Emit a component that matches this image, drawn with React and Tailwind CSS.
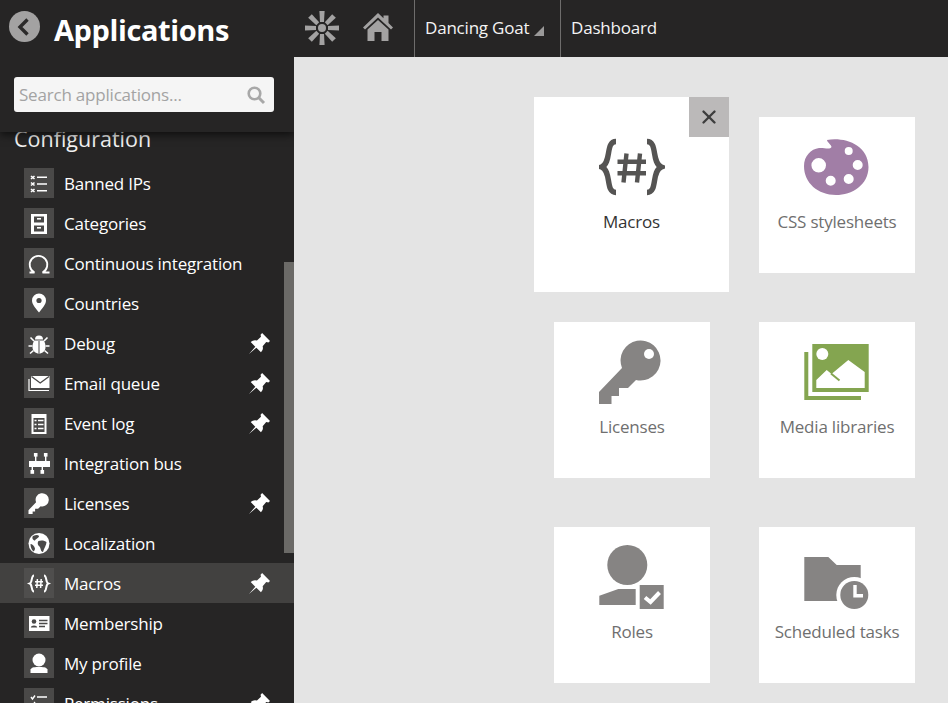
import { X } from 'lucide-react';

const keyPath = 'M0 64V52L23 28A20 20 0 1 1 37 40L29 48H20V56H12.5V64Z';

function Pin() {
  return (
    <svg viewBox="0 0 20 20" className="w-[21px] h-[21px] shrink-0" fill="#fff">
      <path d="M12.5 0L20 7.5L18.5 9L16.4 8.6L13 12.6Q14 16 11.4 18.4L7 14L0 20L6 13L1.6 8.6Q4.2 6.2 7.6 7.2L11.4 3.6L11 1.6Z" />
    </svg>
  );
}

const smallIcons = {
  banned: (
    <g>
      <g stroke="#fff" strokeWidth="1.6">
        <path d="M7 8L10.5 11M10.5 8L7 11M7 14.5L10.5 17.5M10.5 14.5L7 17.5M7 21L10.5 24M10.5 21L7 24" />
      </g>
      <path d="M13 9.3H23M13 16H23M13 22.7H23" stroke="#fff" strokeWidth="1.4" />
    </g>
  ),
  categories: (
    <g>
      <rect x="7" y="6" width="16" height="20" fill="#fff" />
      <rect x="10" y="8.5" width="10" height="6" fill="#4a4948" />
      <rect x="10" y="17.5" width="10" height="6" fill="#4a4948" />
      <rect x="13" y="10" width="4" height="1.6" fill="#fff" />
      <rect x="13" y="19" width="4" height="1.6" fill="#fff" />
    </g>
  ),
  ci: (
    <path d="M5.5 24.5H10.5A8.8 8.8 0 1 1 18.5 24.5H25.5" fill="none" stroke="#fff" strokeWidth="1.8" />
  ),
  pin: (
    <g>
      <path d="M15 24.5C11 19.5 8 16 8 12.5A7 7 0 0 1 22 12.5C22 16 19 19.5 15 24.5Z" fill="#fff" />
      <circle cx="15" cy="12.5" r="2.6" fill="#4a4948" />
    </g>
  ),
  bug: (
    <g fill="#fff">
      <path d="M10.5 12.5H19.5C21 14 21.5 17 21.5 19C21.5 23 18.5 25.5 15 25.5C11.5 25.5 8.5 23 8.5 19C8.5 17 9 14 10.5 12.5Z" />
      <path d="M11 11.5A4 4 0 0 1 19 11.5Z" />
      <path d="M14.5 13V25.5H15.5V13Z" fill="#4a4948" />
      <path d="M10 13L6.5 9.5M20 13L23.5 9.5M8.5 18H4.5M21.5 18H25.5M9.5 22.5L6 25.5M20.5 22.5L24 25.5" stroke="#fff" strokeWidth="1.6" />
    </g>
  ),
  email: (
    <g>
      <path d="M7 8H25.5V20H7Z" fill="#fff" />
      <path d="M7.5 8.5L16.2 15L25 8.5" fill="none" stroke="#4a4948" strokeWidth="1.4" />
      <path d="M5 11V22.5H25" fill="none" stroke="#fff" strokeWidth="1.2" />
    </g>
  ),
  log: (
    <g>
      <rect x="7.5" y="6" width="15" height="20" fill="#fff" />
      <rect x="9.5" y="10" width="11" height="14" fill="#4a4948" />
      <path d="M10.5 12.5H12.5M14 12.5H19.5M10.5 16.5H12.5M14 16.5H19.5M10.5 20.5H12.5M14 20.5H19.5" stroke="#fff" strokeWidth="1.4" />
    </g>
  ),
  bus: (
    <g fill="#fff">
      <rect x="5" y="13" width="21" height="6" />
      <rect x="11" y="5" width="1.4" height="8" />
      <rect x="21" y="5" width="1.4" height="8" />
      <rect x="7.6" y="19" width="1.4" height="5" />
      <rect x="17.6" y="19" width="1.4" height="5" />
      <rect x="9.9" y="5" width="3.6" height="3.6" />
      <rect x="19.9" y="5" width="3.6" height="3.6" />
      <rect x="6.5" y="22" width="3.6" height="3.8" />
      <rect x="16.5" y="22" width="3.6" height="3.8" />
    </g>
  ),
  key: <path d={keyPath} fill="#fff" transform="translate(4.5 5) scale(0.33)" />,
  globe: (
    <g>
      <circle cx="15" cy="15.5" r="10.5" fill="#fff" />
      <path d="M9 8C12 6.5 14 6.5 15 8C15 10 12 10.5 11 12.5C9 12.5 7.5 10 9 8ZM14.5 13C17 12 21 12.5 22.5 14C22.5 17 20 20 19 24C16.5 24 17 20 15.5 18.5C14 17.5 13 15 14.5 13ZM6.5 16C8 16 10.5 18 11 20.5C11 22 10 23 9.5 23.5C7.5 21.5 6.5 19 6.5 16Z" fill="#4a4948" />
    </g>
  ),
  macros: (
    <g fill="none" stroke="#fff" strokeWidth="2">
      <path d="M10 7.5C7 7.5 8.5 14.5 5.8 15.5C8.5 16.5 7 23.5 10 23.5" />
      <path d="M20 7.5C23 7.5 21.5 14.5 24.2 15.5C21.5 16.5 23 23.5 20 23.5" />
      <path d="M13.4 11L12.8 20M17.2 11L16.6 20M11 13.8H19M11 17.2H19" strokeWidth="1.5" />
    </g>
  ),
  card: (
    <g>
      <rect x="5" y="8" width="20.5" height="15" fill="#fff" />
      <circle cx="10" cy="13.5" r="2.3" fill="#4a4948" />
      <path d="M6.8 19.5C6.8 16.8 13.2 16.8 13.2 19.5Z" fill="#4a4948" />
      <path d="M15 12.5H23.5M15 15.5H23.5M15 18.5H21" stroke="#4a4948" strokeWidth="1.4" />
    </g>
  ),
  user: (
    <g fill="#fff">
      <circle cx="15" cy="12" r="6.5" />
      <path d="M6.5 25V21.5C8 19 11 19 15 19C19 19 22 19 23.5 21.5V25Z" />
    </g>
  ),
  perms: (
    <g fill="none" stroke="#fff" strokeWidth="1.4">
      <path d="M7 9L8.5 11L11 7.5M13 9H23" />
      <path d="M7 15.5L8.5 17.5L11 14M13 16H23" />
      <path d="M7 22L8.5 24L11 20.5M13 22.5H23" />
    </g>
  ),
};

const apps = [
  { name: 'Banned IPs', icon: 'banned' },
  { name: 'Categories', icon: 'categories' },
  { name: 'Continuous integration', icon: 'ci' },
  { name: 'Countries', icon: 'pin' },
  { name: 'Debug', icon: 'bug', pinned: true },
  { name: 'Email queue', icon: 'email', pinned: true },
  { name: 'Event log', icon: 'log', pinned: true },
  { name: 'Integration bus', icon: 'bus' },
  { name: 'Licenses', icon: 'key', pinned: true },
  { name: 'Localization', icon: 'globe' },
  { name: 'Macros', icon: 'macros', pinned: true, active: true },
  { name: 'Membership', icon: 'card' },
  { name: 'My profile', icon: 'user' },
  { name: 'Permissions', icon: 'perms', pinned: true },
];

function AppRow({ app }) {
  return (
    <div className={`flex items-center h-10 pl-6 pr-[24px] shrink-0 ${app.active ? 'bg-[#424140]' : ''}`}>
      <div className={`w-[30px] h-[30px] shrink-0 ${app.active ? 'bg-[#4f4e4d]' : 'bg-[#4a4948]'}`}>
        <svg viewBox="0 0 30 30" className="w-[30px] h-[30px]">{smallIcons[app.icon]}</svg>
      </div>
      <span className="ml-[10px] mt-[2px] flex-1 text-[17px] leading-6 tracking-[-0.2px] text-white">{app.name}</span>
      {app.pinned && <Pin />}
    </div>
  );
}

function Sidebar() {
  return (
    <aside className="relative w-[294px] h-full shrink-0 bg-[#262525] flex flex-col overflow-hidden">
      <div className="relative z-10 h-[132px] shrink-0 bg-[#262525] shadow-[0_3px_8px_rgba(0,0,0,0.6)] px-[14px]">
        <div className="flex items-center h-[57px]">
          <div className="-ml-[5px] mb-[4px] w-[31px] h-[31px] rounded-full bg-[#a3a2a2] flex items-center justify-center">
            <svg viewBox="0 0 30 30" className="w-[30px] h-[30px]">
              <path d="M17.5 7.5L10 15L17.5 22.5" fill="none" stroke="#2b2a2a" strokeWidth="3.4" />
            </svg>
          </div>
          <h1 className="ml-[14px] pt-[1px] text-[29px] font-bold tracking-[-0.4px] text-white leading-none">Applications</h1>
        </div>
        <div className="mt-5 flex items-center justify-between h-[35px] w-[260px] rounded-[3px] bg-[#f5f5f5] pl-[5px] pr-2">
          <span className="pt-[1px] text-[17px] tracking-[-0.2px] text-[#a3a3a3]">Search applications...</span>
          <svg viewBox="0 0 20 20" className="w-5 h-5">
            <circle cx="8.5" cy="8.5" r="5.8" fill="none" stroke="#a8a8a8" strokeWidth="2.6" />
            <path d="M12.8 12.8L18 18" stroke="#a8a8a8" strokeWidth="3" />
          </svg>
        </div>
      </div>
      <div className="flex-1 flex flex-col">
        <div className="h-10 -mt-[9px] pl-[14px] text-[21.5px] leading-[32px] text-[#f2f2f2] shrink-0">Configuration</div>
        {apps.map((a) => <AppRow key={a.name} app={a} />)}
      </div>
      <div className="absolute right-0 top-[262px] w-[10px] h-[291px] bg-[#6b6a67]" />
    </aside>
  );
}

function TopBar() {
  return (
    <header className="h-[57px] shrink-0 bg-[#262525] flex items-stretch text-[17px] tracking-[-0.2px] text-[#f4f4f4]">
      <div className="w-[120px] flex items-center pl-[10px] gap-[22px]">
        <svg viewBox="0 0 36 36" className="w-9 h-9 -mt-[1px]">
          <g fill="#a3a2a2">
            <circle cx="18" cy="18" r="4" />
            {[0, 45, 90, 135, 180, 225, 270, 315].map((r) => (
              <path key={r} d="M15.4 1H20.6L20 12H16Z" transform={`rotate(${r} 18 18)`} />
            ))}
          </g>
        </svg>
        <svg viewBox="0 0 32 30" className="w-8 h-[30px] -mt-[3px]">
          <path d="M16 1L1 15.5L3 17.5L16 5.5L29 17.5L31 15.5L26.5 11V3.5H21.5V6.2Z" fill="#a3a2a2" />
          <path d="M16 8L5.5 17.5V29H12.5V20H19.5V29H26.5V17.5Z" fill="#a3a2a2" />
        </svg>
      </div>
      <div className="border-l border-[#6e6d6c] w-[146px] flex items-center pl-[10px] pb-[2px]">
        <span>Dancing Goat</span>
        <svg viewBox="0 0 10 10" className="w-[10px] h-[10px] ml-[5px] mt-[7px]">
          <path d="M10 0V10H0Z" fill="#9a9999" />
        </svg>
      </div>
      <div className="border-l border-[#6e6d6c] flex items-center pl-[10px] pb-[2px]">Dashboard</div>
    </header>
  );
}

function Tile({ label, active, viewBox = '0 0 66 64', children }) {
  return (
    <div
      className={`relative bg-white flex flex-col items-center ${active
        ? 'w-[195px] h-[195px] ml-[-20px] mt-[-20px] mr-[-19px] mb-[-19px] pt-[38px]'
        : 'w-[156px] h-[156px] pt-[18px]'}`}
    >
      {active && (
        <div className="absolute top-0 right-0 w-10 h-10 bg-[#bbb9b9] flex items-center justify-center">
          <X className="w-[22px] h-[22px] text-[#3d3d3d]" strokeWidth={2.6} />
        </div>
      )}
      <svg viewBox={viewBox} className="w-[66px] h-16 shrink-0">{children}</svg>
      <div className={`mt-[11px] text-[17px] leading-6 tracking-[-0.2px] ${active ? 'text-[#333]' : 'text-[#6f6f6f]'}`}>{label}</div>
    </div>
  );
}

function Dashboard() {
  return (
    <main className="flex-1 bg-[#e4e4e4] pl-[260px] pt-[60px] overflow-hidden">
      <div className="grid grid-cols-[156px_156px] gap-x-[49px] gap-y-[49px]">
        <Tile label="Macros" active viewBox="0 -4 66 64">
          <g fill="none" stroke="#555453" strokeWidth="5.4">
            <path d="M17 2.5C6 2.5 13 24 2.5 28C13 32 6 53.5 17 53.5" />
            <path d="M48 2.5C59 2.5 52 24 62.5 28C52 32 59 53.5 48 53.5" />
            <path d="M27.5 14.5L24.5 43.5M41 14.5L38 43.5M18.5 22.7H47M18.5 34.3H47" strokeWidth="4.4" />
          </g>
        </Tile>
        <Tile label="CSS stylesheets" viewBox="0 -4 66 64">
          <path
            fillRule="evenodd"
            fill="#a17ea6"
            d="M23 1C40 -2 64 5 64.5 28C64.5 46 48 56 32 56C14 56 0 44 0 27C0 17 7 10 15 9C20 8.5 26 11 27.5 8C27.5 6 23 3 23 1ZM22 26.3A7.3 7.3 0 1 0 7.4 26.3A7.3 7.3 0 1 0 22 26.3ZM31.7 41.7A5 5 0 1 0 21.7 41.7A5 5 0 1 0 31.7 41.7ZM49.7 40A5 5 0 1 0 39.7 40A5 5 0 1 0 49.7 40ZM58.7 26A5 5 0 1 0 48.7 26A5 5 0 1 0 58.7 26ZM48.7 12A4 4 0 1 0 40.7 12A4 4 0 1 0 48.7 12Z"
          />
        </Tile>
        <Tile label="Licenses">
          <path d={keyPath} fill="#868483" />
          <circle cx="50" cy="14" r="5" fill="#fff" />
        </Tile>
        <Tile label="Media libraries">
          <path d="M0.3 12H4.3V56H57V60H0.3Z" fill="#84a550" />
          <rect x="8.3" y="4" width="56.4" height="48" fill="#84a550" />
          <circle cx="18.3" cy="14" r="6" fill="#fff" />
          <path d="M12.3 48V40L22.7 30L27.5 34L44.3 20L60.7 32V48Z" fill="#fff" />
          <path d="M27 33.5L35.5 40.5" stroke="#84a550" strokeWidth="2" />
        </Tile>
        <Tile label="Roles">
          <circle cx="28.3" cy="20" r="20" fill="#868483" />
          <path d="M0.3 50.7L19.3 44H36.7V60H0.3Z" fill="#868483" />
          <rect x="40.7" y="40" width="24" height="24" fill="#868483" />
          <path d="M46 52.5L51.5 57L60.5 47.5" fill="none" stroke="#fff" strokeWidth="4" />
        </Tile>
        <Tile label="Scheduled tasks">
          <path d="M0.3 12H24.3L32.7 20H56.7V40H40V56H0.3Z" fill="#868483" />
          <circle cx="50.3" cy="50" r="18" fill="#fff" />
          <circle cx="50.3" cy="50" r="14" fill="#868483" />
          <path d="M51 40V50.7H59" fill="none" stroke="#fff" strokeWidth="3.4" />
        </Tile>
      </div>
    </main>
  );
}

export default function App() {
  return (
    <div className="flex w-[948px] h-[703px] overflow-hidden font-['Open_Sans','Noto_Sans',sans-serif]">
      <Sidebar />
      <div className="flex-1 flex flex-col min-w-0">
        <TopBar />
        <Dashboard />
      </div>
    </div>
  );
}
